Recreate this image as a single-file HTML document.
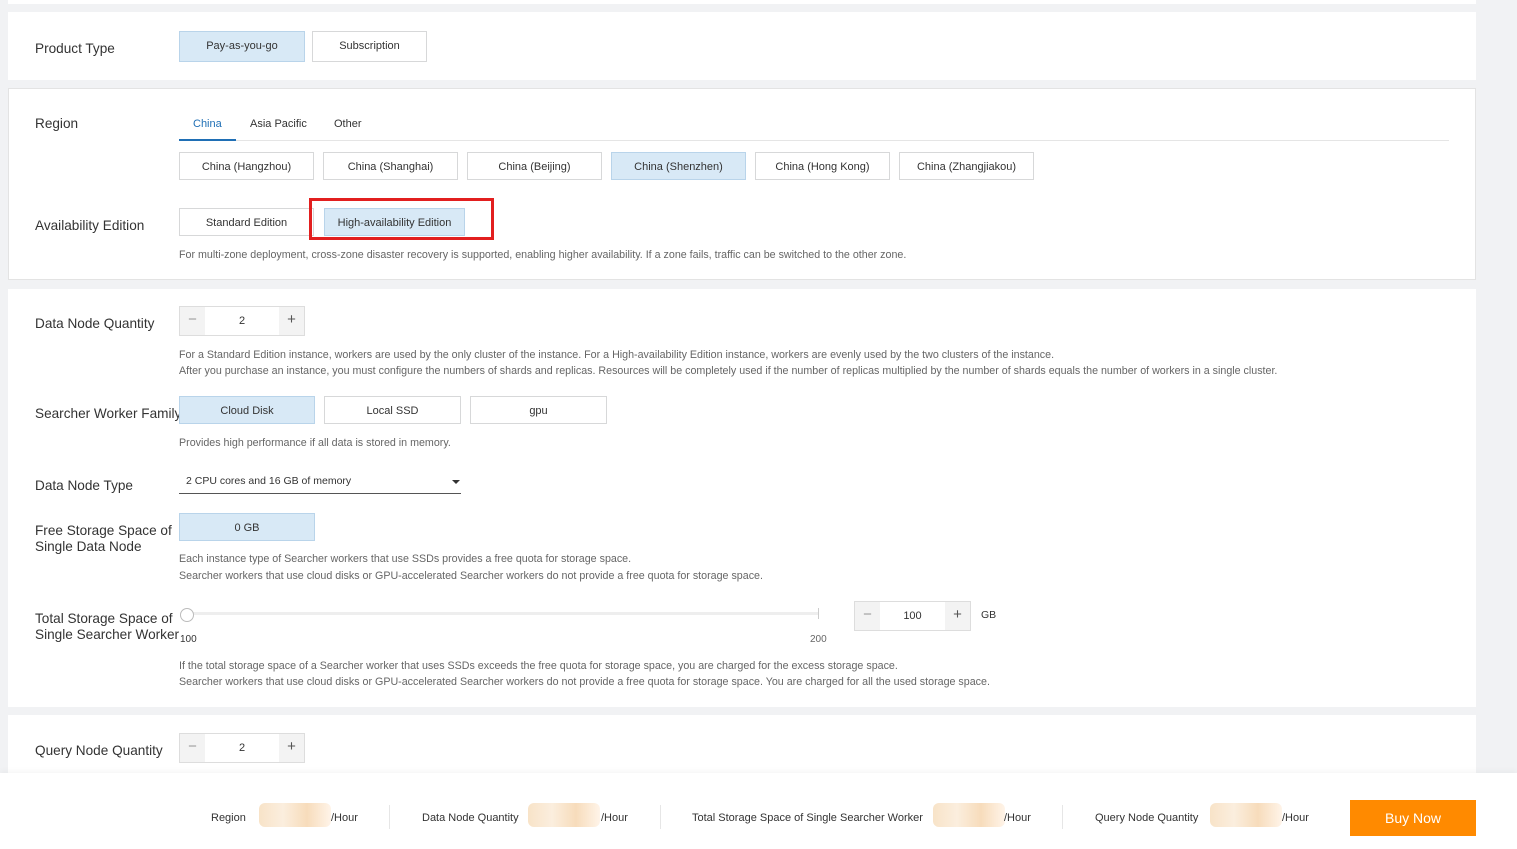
<!DOCTYPE html><html><head><style>
body{margin:0;width:1517px;height:849px;background:#f1f2f4;position:relative;overflow:hidden;font-family:"Liberation Sans",sans-serif;color:#333}
.a{position:absolute}
.card{position:absolute;left:8px;width:1468px;background:#fff}
.lb{position:absolute;left:35px;font-size:13.6px;color:#333;line-height:16px;margin-top:1px}
.b{position:absolute;height:28px;border:1px solid #d7d8d9;box-sizing:border-box;background:#fff;font-size:11px;text-align:center;line-height:28px;color:#333}
.s{background:#d8e9f6;border-color:#b9d4ea}
.h{position:absolute;left:179px;font-size:10.7px;color:#666;line-height:16px;white-space:nowrap;margin-top:1px}
.num{position:absolute;width:126px;height:30px;border:1px solid #ddd;box-sizing:border-box;background:#fff}
.num span{position:absolute;top:0;width:25px;height:28px;background:#f3f3f3;text-align:center;line-height:26px;color:#999;font-size:15px}
.num i{position:absolute;left:25px;right:25px;top:0;line-height:28px;text-align:center;font-style:normal;font-size:11px}
.f{position:absolute;top:812px;font-size:11px;color:#333}
.blur{position:absolute;top:803px;width:72px;height:24px;background:linear-gradient(90deg,#f8e3c8,#fbeede,#f7dcbb,#fff4e9);border-radius:6px}
.sep{position:absolute;top:805px;width:1px;height:24px;background:#e6e6e6}
</style></head><body>
<div class="card" style="top:0;height:4px"></div>
<div class="card" style="top:12px;height:68px"></div>
<div class="lb" style="top:40px">Product Type</div>
<div class="b s" style="left:179px;top:31px;width:126px;height:31px;line-height:29px">Pay-as-you-go</div>
<div class="b" style="left:312px;top:31px;width:115px;height:31px;line-height:29px">Subscription</div>

<div class="card" style="top:88px;height:192px;border:1px solid #e3e3e3;box-sizing:border-box"></div>
<div class="lb" style="top:115px">Region</div>
<div class="a" style="left:179px;top:140px;width:1270px;height:1px;background:#e5e5e5"></div>
<div class="a" style="left:179px;top:139px;width:57px;height:2px;background:#1f6fb5"></div>
<div class="a" style="left:193px;top:118px;font-size:11px;color:#1f6fb5">China</div>
<div class="a" style="left:250px;top:118px;font-size:11px">Asia Pacific</div>
<div class="a" style="left:334px;top:118px;font-size:11px">Other</div>
<div class="b" style="left:179px;top:152px;width:135px">China (Hangzhou)</div>
<div class="b" style="left:323px;top:152px;width:135px">China (Shanghai)</div>
<div class="b" style="left:467px;top:152px;width:135px">China (Beijing)</div>
<div class="b s" style="left:611px;top:152px;width:135px">China (Shenzhen)</div>
<div class="b" style="left:755px;top:152px;width:135px">China (Hong Kong)</div>
<div class="b" style="left:899px;top:152px;width:135px">China (Zhangjiakou)</div>
<div class="lb" style="top:217px">Availability Edition</div>
<div class="b" style="left:179px;top:208px;width:135px">Standard Edition</div>
<div class="b s" style="left:324px;top:208px;width:141px">High-availability Edition</div>
<div class="a" style="left:309px;top:198px;width:179px;height:36px;border:3px solid #e21f1f"></div>
<div class="h" style="top:246px">For multi-zone deployment, cross-zone disaster recovery is supported, enabling higher availability. If a zone fails, traffic can be switched to the other zone.</div>

<div class="card" style="top:289px;height:418px"></div>
<div class="lb" style="top:315px">Data Node Quantity</div>
<div class="num" style="left:179px;top:306px"><span style="left:0">−</span><i>2</i><span style="right:0;color:#555">+</span></div>
<div class="h" style="top:346px">For a Standard Edition instance, workers are used by the only cluster of the instance. For a High-availability Edition instance, workers are evenly used by the two clusters of the instance.</div>
<div class="h" style="top:362px">After you purchase an instance, you must configure the numbers of shards and replicas. Resources will be completely used if the number of replicas multiplied by the number of shards equals the number of workers in a single cluster.</div>
<div class="lb" style="top:405px">Searcher Worker Family</div>
<div class="b s" style="left:179px;top:396px;width:136px">Cloud Disk</div>
<div class="b" style="left:324px;top:396px;width:137px">Local SSD</div>
<div class="b" style="left:470px;top:396px;width:137px">gpu</div>
<div class="h" style="top:434px">Provides high performance if all data is stored in memory.</div>
<div class="lb" style="top:477px">Data Node Type</div>
<div class="a" style="left:179px;top:470px;width:282px;height:24px;border-bottom:1px solid #555;font-size:10.5px;line-height:22px;padding-left:7px;box-sizing:border-box">2 CPU cores and 16 GB of memory</div>
<div class="a" style="left:452px;top:480px;border:4px solid transparent;border-top:4px solid #333"></div>
<div class="lb" style="top:522px">Free Storage Space of<br>Single Data Node</div>
<div class="b s" style="left:179px;top:513px;width:136px">0 GB</div>
<div class="h" style="top:550px">Each instance type of Searcher workers that use SSDs provides a free quota for storage space.</div>
<div class="h" style="top:567px">Searcher workers that use cloud disks or GPU-accelerated Searcher workers do not provide a free quota for storage space.</div>
<div class="lb" style="top:610px">Total Storage Space of<br>Single Searcher Worker</div>
<div class="a" style="left:187px;top:612px;width:631px;height:3px;background:#eee"></div>
<div class="a" style="left:818px;top:608px;width:1px;height:11px;background:#ccc"></div>
<div class="a" style="left:180px;top:608px;width:12px;height:12px;border:1px solid #bbb;border-radius:50%;background:#fff"></div>
<div class="a" style="left:180px;top:634px;font-size:10px">100</div>
<div class="a" style="left:810px;top:634px;font-size:10px;color:#666">200</div>
<div class="num" style="left:854px;top:601px;width:117px"><span style="left:0">−</span><i>100</i><span style="right:0;color:#555">+</span></div>
<div class="a" style="left:981px;top:609px;font-size:10.5px">GB</div>
<div class="h" style="top:657px">If the total storage space of a Searcher worker that uses SSDs exceeds the free quota for storage space, you are charged for the excess storage space.</div>
<div class="h" style="top:673px">Searcher workers that use cloud disks or GPU-accelerated Searcher workers do not provide a free quota for storage space. You are charged for all the used storage space.</div>

<div class="card" style="top:715px;height:60px"></div>
<div class="lb" style="top:742px">Query Node Quantity</div>
<div class="num" style="left:179px;top:733px"><span style="left:0">−</span><i>2</i><span style="right:0;color:#555">+</span></div>

<div class="a" style="left:0;top:773px;width:1517px;height:76px;background:#fff;box-shadow:0 -2px 6px rgba(0,0,0,.04)"></div>
<div class="f" style="left:211px">Region</div><div class="blur" style="left:259px"></div><div class="f" style="left:331px">/Hour</div>
<div class="sep" style="left:389px"></div>
<div class="f" style="left:422px">Data Node Quantity</div><div class="blur" style="left:528px"></div><div class="f" style="left:601px">/Hour</div>
<div class="sep" style="left:660px"></div>
<div class="f" style="left:692px">Total Storage Space of Single Searcher Worker</div><div class="blur" style="left:933px"></div><div class="f" style="left:1004px">/Hour</div>
<div class="sep" style="left:1062px"></div>
<div class="f" style="left:1095px">Query Node Quantity</div><div class="blur" style="left:1210px"></div><div class="f" style="left:1282px">/Hour</div>
<div class="a" style="left:1350px;top:800px;width:126px;height:36px;background:#ff8a00;color:#fff;font-size:14px;text-align:center;line-height:36px">Buy Now</div>
</body></html>
